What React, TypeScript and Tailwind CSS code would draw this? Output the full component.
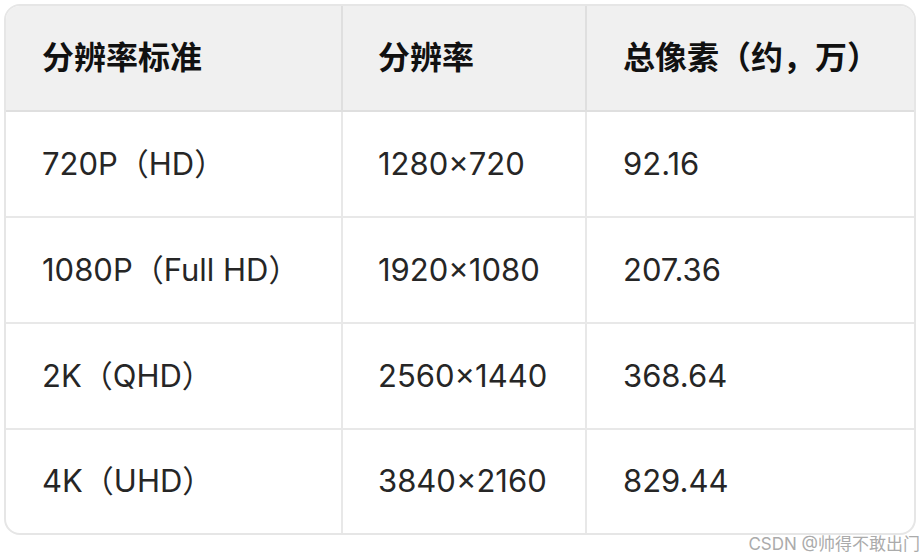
import React from "react";

const rows = [
  ["720P（HD）", "1280×720", "92.16"],
  ["1080P（Full HD）", "1920×1080", "207.36"],
  ["2K（QHD）", "2560×1440", "368.64"],
  ["4K（UHD）", "3840×2160", "829.44"],
];

export default function App() {
  const font = { fontFamily: 'Inter, "Noto Sans CJK SC", sans-serif' };
  const pad = ["pl-[36px]", "pl-[35px]", "pl-[36px]"];
  return (
    <div className="relative w-[922px] h-[558px] bg-white" style={font}>
      <div className="absolute left-[4px] top-[4px] w-[912px] h-[531px] rounded-[16px] border-2 border-[#e6e6e6] overflow-hidden">
        <div className="grid grid-cols-[337px_244px_327px] grid-rows-[106px_106px_106px_106px_103px]">
          {["分辨率标准", "分辨率", "总像素（约，万）"].map((h, i) => (
            <div
              key={h}
              className={`flex items-center ${pad[i]} bg-[#f0f0f0] border-b-2 border-[#dfdfdf] text-[32px] font-bold text-[#111] ${i < 2 ? "border-r-2" : ""}`}
            >
              {h}
            </div>
          ))}
          {rows.map((r, ri) =>
            r.map((c, ci) => (
              <div
                key={ri + "-" + ci}
                className={`flex items-center ${pad[ci]} text-[31px] text-[#262626] border-[#e8e8e8] ${ci < 2 ? "border-r-2" : ""} ${ri < 3 ? "border-b-2" : ""}`}
              >
                {c}
              </div>
            ))
          )}
        </div>
      </div>
      <div className="absolute right-[2px] top-[533px] text-[17px] leading-[22px] text-[#ababab]">
        CSDN @帅得不敢出门
      </div>
    </div>
  );
}
